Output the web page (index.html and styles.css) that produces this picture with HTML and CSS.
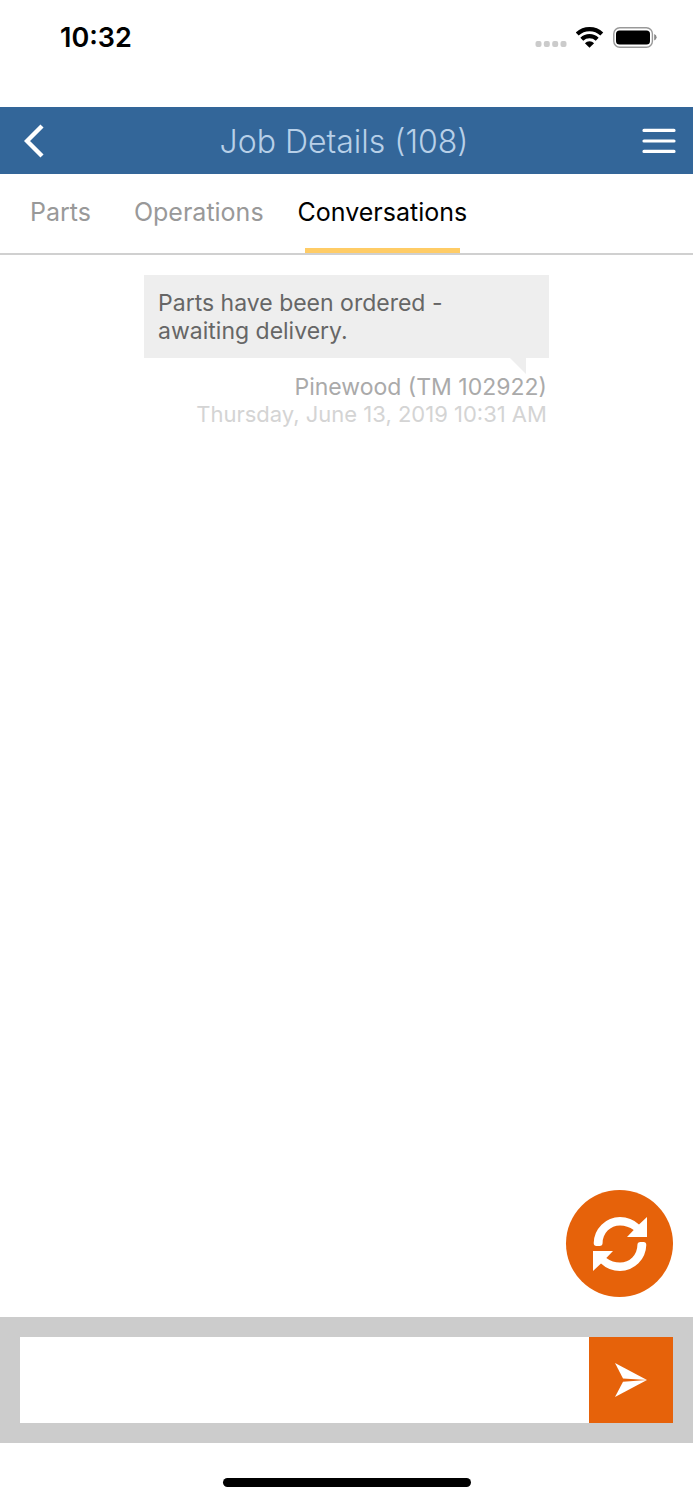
FILE: index.html
```html
<!DOCTYPE html>
<html lang="en">
<head>
    <meta charset="UTF-8">
    <meta name="viewport" content="width=device-width, initial-scale=1.0">
    <title>Job Details</title>
    <link rel="stylesheet" href="styles.css">
</head>
<body>
    <div class="app">
        <div class="status-bar">
            <div class="status-time">10:32</div>
            <div class="status-icons">
                <svg width="32" height="8" viewBox="0 0 32 8" fill="#cbcbcb">
                    <rect x="0.5" y="1" width="6" height="6" rx="2"/>
                    <rect x="8.8" y="1" width="6" height="6" rx="2"/>
                    <rect x="17.2" y="1" width="6" height="6" rx="2"/>
                    <rect x="25.5" y="1" width="6" height="6" rx="2"/>
                </svg>
                <svg width="28" height="21" viewBox="0 0 28 21" fill="none" stroke="#000" stroke-width="4.2">
                    <path d="M1.2 7 A18 18 0 0 1 25.8 7"/>
                    <path d="M5.8 12.2 A11.2 11.2 0 0 1 21.2 12.2"/>
                    <path d="M8.9 16.2 A6.5 6.5 0 0 1 18.1 16.2 L13.5 20.8 Z" fill="#000" stroke="none"/>
                </svg>
                <svg width="44" height="21" viewBox="0 0 44 21">
                    <rect x="0.8" y="0.8" width="38.6" height="19.4" rx="6" fill="none" stroke="#999" stroke-width="1.4"/>
                    <rect x="3" y="3.4" width="34" height="14.2" rx="3.5" fill="#000"/>
                    <path d="M41.2 7 Q43.6 8 43.6 10.3 T41.2 13.6 Z" fill="#888"/>
                </svg>
            </div>
        </div>

        <header class="header">
            <button class="header-button" type="button" aria-label="Back">
                <svg width="22" height="34" viewBox="0 0 22 34" fill="none" stroke="#fff" stroke-width="4.4">
                    <path d="M18 2 L3 17 L18 32"/>
                </svg>
            </button>
            <h1 class="header-title">Job Details (108)</h1>
            <button class="header-button" type="button" aria-label="Menu">
                <svg width="34" height="26" viewBox="0 0 34 26" fill="none" stroke="#fff" stroke-width="3.2" stroke-linecap="round">
                    <path d="M2 2.4 H32 M2 13 H32 M2 23.4 H32"/>
                </svg>
            </button>
        </header>

        <nav class="tabs">
            <a class="tab" href="#parts">Parts</a>
            <a class="tab" href="#operations">Operations</a>
            <a class="tab active" href="#conversations">Conversations</a>
        </nav>

        <main class="conversation">
            <article class="message">
                <p class="message-bubble">Parts have been ordered - awaiting delivery.</p>
                <div class="message-author">Pinewood (TM 102922)</div>
                <div class="message-date">Thursday, June 13, 2019 10:31 AM</div>
            </article>
            <button class="refresh-button" type="button" aria-label="Refresh">
                <svg width="54" height="54" viewBox="0 0 54 54" fill="#fff">
                    <path d="M0.7 26 A26.5 26.5 0 0 1 27 0 Q38 0 46 7.5 L54 0 V20 H34 L40.7 13 Q34.5 8.4 27 8.4 A17.5 17.5 0 0 0 9.6 26 Q9.6 29 6.5 29 H3.5 Q0.7 29 0.7 26 Z"/>
                    <path d="M53.3 28 A26.5 26.5 0 0 1 27 54 Q16 54 8 46.5 L0 54 V34 H20 L13.3 41 Q19.5 45.6 27 45.6 A17.5 17.5 0 0 0 44.4 28 Q44.4 25 47.5 25 H50.5 Q53.3 25 53.3 28 Z"/>
                </svg>
            </button>
        </main>

        <form class="composer">
            <input class="composer-input" type="text" aria-label="Message">
            <button class="send-button" type="submit" aria-label="Send">
                <svg width="32" height="34" viewBox="0 0 32 34" fill="#fff">
                    <path d="M0 0 L32 17 L8 15.4 Z"/>
                    <path d="M0 34 L32 17 L8 18.8 Z"/>
                </svg>
            </button>
        </form>

        <div class="home-area">
            <div class="home-indicator"></div>
        </div>
    </div>
</body>
</html>
```

FILE: styles.css
```css
* {
    box-sizing: border-box;
}

body {
    margin: 0;
    font-family: Inter, "Liberation Sans", sans-serif;
    background-color: #fff;
}

button {
    padding: 0;
    border: none;
    background: none;
    cursor: pointer;
}

svg {
    display: block;
}

.app {
    display: flex;
    flex-direction: column;
    min-height: 100vh;
}

.status-bar {
    display: flex;
    justify-content: space-between;
    align-items: flex-start;
    padding: 22px 36px 53px 60px;
}

.status-time {
    font-size: 27px;
    font-weight: 600;
    line-height: 32px;
}

.status-icons {
    display: flex;
    align-items: flex-end;
    gap: 9px;
    padding-top: 5px;
}

.header {
    display: flex;
    justify-content: space-between;
    align-items: center;
    height: 67px;
    padding: 0 17px 0 24px;
    background-color: #336699;
}

.header-title {
    margin: 0;
    padding-top: 2px;
    font-size: 32px;
    font-weight: 300;
    color: #b8d0e8;
}

.tabs {
    display: flex;
    gap: 34px;
    padding: 0 30px;
    border-bottom: 2px solid #d0d0d0;
}

.tab {
    position: relative;
    padding: 22px 0 25px;
    font-size: 25px;
    line-height: 32px;
    color: #999;
    text-decoration: none;
}

.tab:first-child {
    margin-right: 9px;
}

.tab.active {
    color: #000;
}

.tab.active::after {
    content: "";
    position: absolute;
    left: 7px;
    right: 7px;
    bottom: 0;
    height: 5px;
    background-color: #ffcc66;
}

.conversation {
    display: flex;
    flex: 1;
    flex-direction: column;
    justify-content: space-between;
    padding: 20px;
}

.message {
    align-self: center;
    width: 62%;
    text-align: right;
}

.message-bubble {
    position: relative;
    margin: 0 0 15px;
    padding: 14px 80px 13px 14px;
    font-size: 23px;
    line-height: 28px;
    text-align: left;
    color: #666;
    background-color: #eee;
}

.message-bubble::after {
    content: "";
    position: absolute;
    top: 100%;
    right: 23px;
    border-top: 16px solid #eee;
    border-left: 16px solid transparent;
}

.message-author {
    padding-right: 2px;
    font-size: 23px;
    line-height: 28px;
    color: #aaa;
}

.message-date {
    padding-right: 2px;
    font-size: 22px;
    line-height: 27px;
    white-space: nowrap;
    color: #d4d4d4;
}

.refresh-button {
    display: flex;
    align-items: center;
    justify-content: center;
    align-self: flex-end;
    width: 107px;
    height: 107px;
    border-radius: 50%;
    background-color: #e6620a;
}

.composer {
    display: flex;
    padding: 20px;
    background-color: #ccc;
}

.composer-input {
    flex: 1;
    min-width: 0;
    height: 86px;
    padding: 0 16px;
    border: none;
    border-radius: 0;
    font-family: inherit;
    font-size: 26px;
    background-color: #fff;
}

.send-button {
    display: flex;
    align-items: center;
    justify-content: center;
    width: 84px;
    background-color: #e6620a;
}

.home-area {
    display: flex;
    justify-content: center;
    padding: 35px 0 13px;
}

.home-indicator {
    width: 248px;
    height: 9px;
    border-radius: 5px;
    background-color: #000;
}
```
